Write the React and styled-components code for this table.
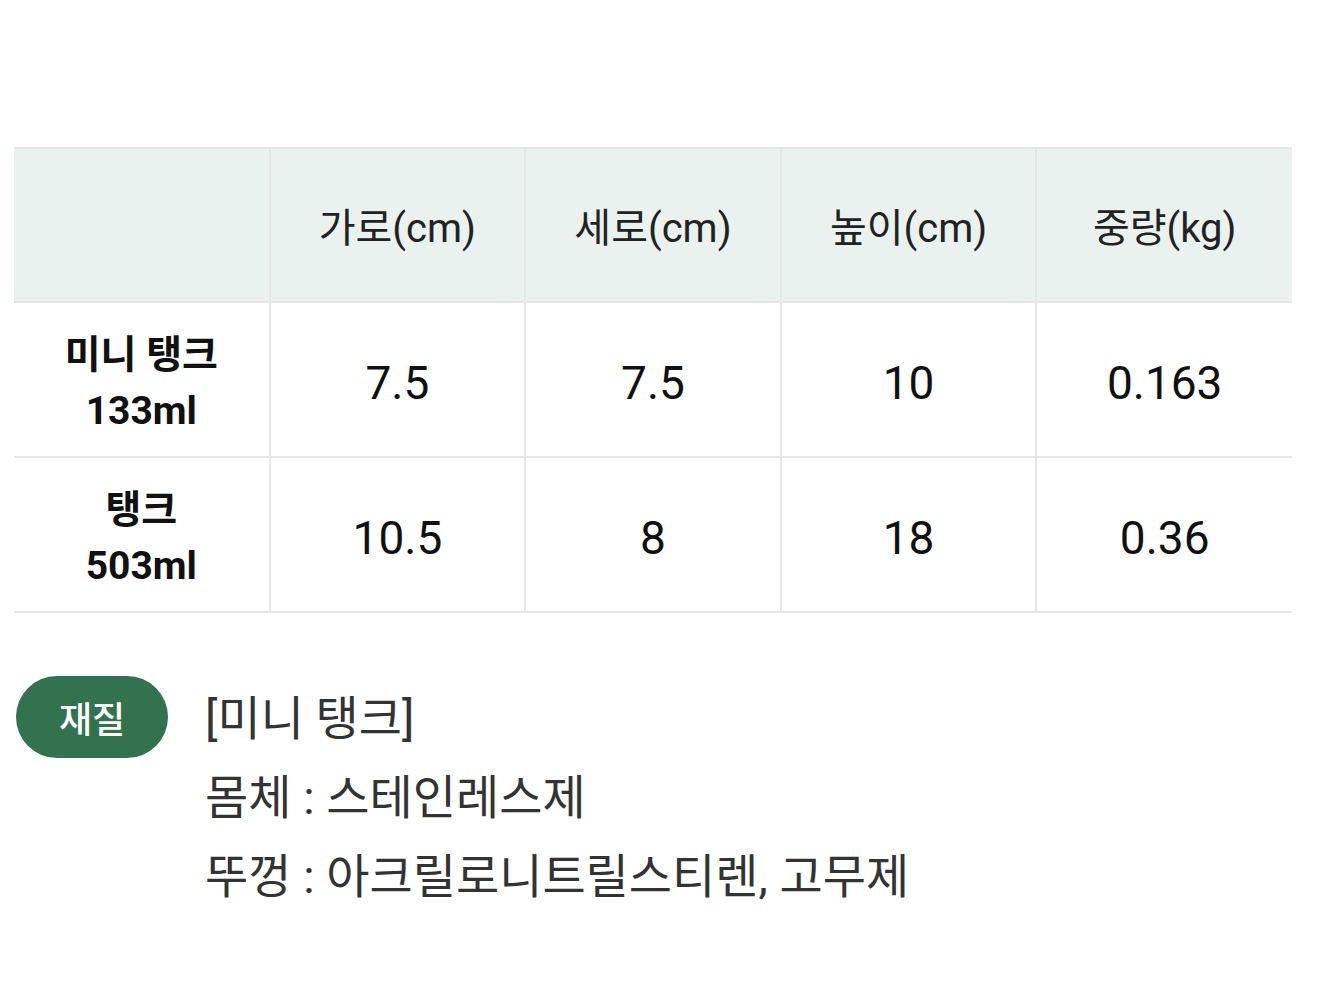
import React from "react";
import styled, { createGlobalStyle } from "styled-components";

const GlobalStyle = createGlobalStyle`
  body {
    margin: 0;
    background: #ffffff;
    font-family: Roboto, "Noto Sans CJK KR", sans-serif;
    color: #222;
  }
`

const Page = styled.div`
  padding: 147px 52px 0 14px;
`

const SpecTable = styled.table`
  width: 100%;
  border-collapse: collapse;
  table-layout: fixed;
  border-top: 2px solid #e6e6e6;
`

const HeadCell = styled.th`
  height: 152px;
  padding: 0;
  background: #e9f2ef;
  font-size: 40px;
  font-weight: 400;
  color: #222;
  text-align: center;
  border-bottom: 2px solid #e3e6e5;
  border-left: 2px solid #e3e6e5;

  &:first-child {
    border-left: none;
  }
`

const Cell = styled.td`
  height: 146px;
  padding: 7px 0 0;
  text-align: center;
  font-size: 46px;
  color: #111;
  border-bottom: 2px solid #e6e6e6;
  border-left: 2px solid #e6e6e6;

  &:first-child {
    border-left: none;
    font-size: 39px;
    font-weight: 700;
    line-height: 56px;
  }
`

const Material = styled.div`
  display: flex;
  align-items: flex-start;
  gap: 37px;
  margin-top: 63px;
  padding-left: 2px;
`

const Pill = styled.div`
  flex: none;
  width: 152px;
  height: 82px;
  border-radius: 41px;
  background: #32724f;
  color: #fff;
  font-size: 36px;
  font-weight: 500;
  display: flex;
  align-items: center;
  justify-content: center;
`

const Lines = styled.div`
  margin-top: 3px;
  font-size: 47px;
  line-height: 79px;
  color: #333;
`

const rows = [
  { name: ["미니 탱크", "133ml"], values: ["7.5", "7.5", "10", "0.163"] },
  { name: ["탱크", "503ml"], values: ["10.5", "8", "18", "0.36"] },
]

const headers = ["가로(cm)", "세로(cm)", "높이(cm)", "중량(kg)"]

export default function App() {
  return (
    <Page>
      <GlobalStyle />
      <SpecTable>
        <thead>
          <tr>
            <HeadCell />
            {headers.map(h => <HeadCell key={h}>{h}</HeadCell>)}
          </tr>
        </thead>
        <tbody>
          {rows.map(r => (
            <tr key={r.name[1]}>
              <Cell>{r.name[0]}<br />{r.name[1]}</Cell>
              {r.values.map((v, i) => <Cell key={i}>{v}</Cell>)}
            </tr>
          ))}
        </tbody>
      </SpecTable>
      <Material>
        <Pill>재질</Pill>
        <Lines>
          <div>[미니 탱크]</div>
          <div>몸체 : 스테인레스제</div>
          <div>뚜껑 : 아크릴로니트릴스티렌, 고무제</div>
        </Lines>
      </Material>
    </Page>
  )
}
